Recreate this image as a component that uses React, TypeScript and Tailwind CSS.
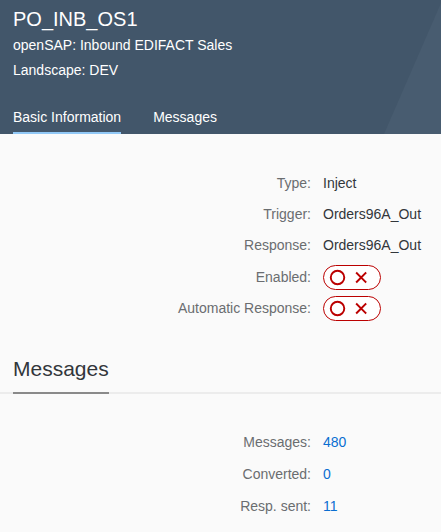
const basicInfo = [
    { label: "Type:", value: "Inject" },
    { label: "Trigger:", value: "Orders96A_Out" },
    { label: "Response:", value: "Orders96A_Out" },
];

const switches = ["Enabled:", "Automatic Response:"];

const messageStats = [
    { label: "Messages:", value: "480" },
    { label: "Converted:", value: "0" },
    { label: "Resp. sent:", value: "11" },
];

const OffSwitch = () => {
    return (
        <div className="flex items-center w-[58px] h-[25px] rounded-full border border-[#bb0000] bg-white">
            <svg width="58" height="25" viewBox="0 0 58 25">
                <circle cx="14" cy="12.5" r="7" fill="none" stroke="#bb0000" strokeWidth="2" />
                <path d="M34 8 L43 17 M43 8 L34 17" stroke="#bb0000" strokeWidth="2" strokeLinecap="square" />
            </svg>
        </div>
    );
};

const App = () => {
    return (
        <div className="w-[441px] h-[532px] overflow-hidden bg-[#fafafa] font-['Liberation_Sans',Arial,sans-serif]">
            <div className="relative h-[134px] bg-[#42566a] overflow-hidden">
                <svg className="absolute inset-0" width="441" height="134" viewBox="0 0 441 134">
                    <polygon points="441,3 441,134 384,134" fill="#485c70" />
                </svg>
                <div className="relative px-[13px] pt-[5px] text-white">
                    <h1 className="text-[20px] leading-7">PO_INB_OS1</h1>
                    <div className="mt-[2px] text-[14px] leading-5">openSAP: Inbound EDIFACT Sales</div>
                    <div className="mt-[5px] text-[14px] leading-5">Landscape: DEV</div>
                    <div className="flex gap-8 mt-[27px] text-[14px] leading-5">
                        <div className="pb-[5px] border-b-2 border-[#91c8f6]">Basic Information</div>
                        <div className="pb-[5px] border-b-2 border-transparent">Messages</div>
                    </div>
                </div>
            </div>

            <div className="pt-[34px] text-[14px]">
                {basicInfo.map((row, i) => (
                    <div key={i} className="grid grid-cols-[311px_1fr] gap-x-3 h-[31px] items-center">
                        <span className="text-right text-[#6a6d70]">{row.label}</span>
                        <span className="text-[#32363a]">{row.value}</span>
                    </div>
                ))}
                <div className="mt-px">
                    {switches.map((label, i) => (
                        <div key={i} className="grid grid-cols-[311px_1fr] gap-x-3 h-[31px] items-center">
                            <span className="text-right text-[#6a6d70]">{label}</span>
                            <OffSwitch />
                        </div>
                    ))}
                </div>
            </div>

            <div className="mt-[30px] border-b-2 border-[#ececec]">
                <div className="mx-[13px] w-fit -mb-[2px] pb-[8px] border-b-2 border-[#8a8a8a]">
                    <h2 className="text-[21px] leading-[30px] text-[#32363a]">Messages</h2>
                </div>
            </div>

            <div className="pt-[32px] text-[14px]">
                {messageStats.map((row, i) => (
                    <div key={i} className="grid grid-cols-[311px_1fr] gap-x-3 h-[32px] items-center">
                        <span className="text-right text-[#6a6d70]">{row.label}</span>
                        <span className="text-[#0a6ed1]">{row.value}</span>
                    </div>
                ))}
            </div>
        </div>
    );
};

export default App;
